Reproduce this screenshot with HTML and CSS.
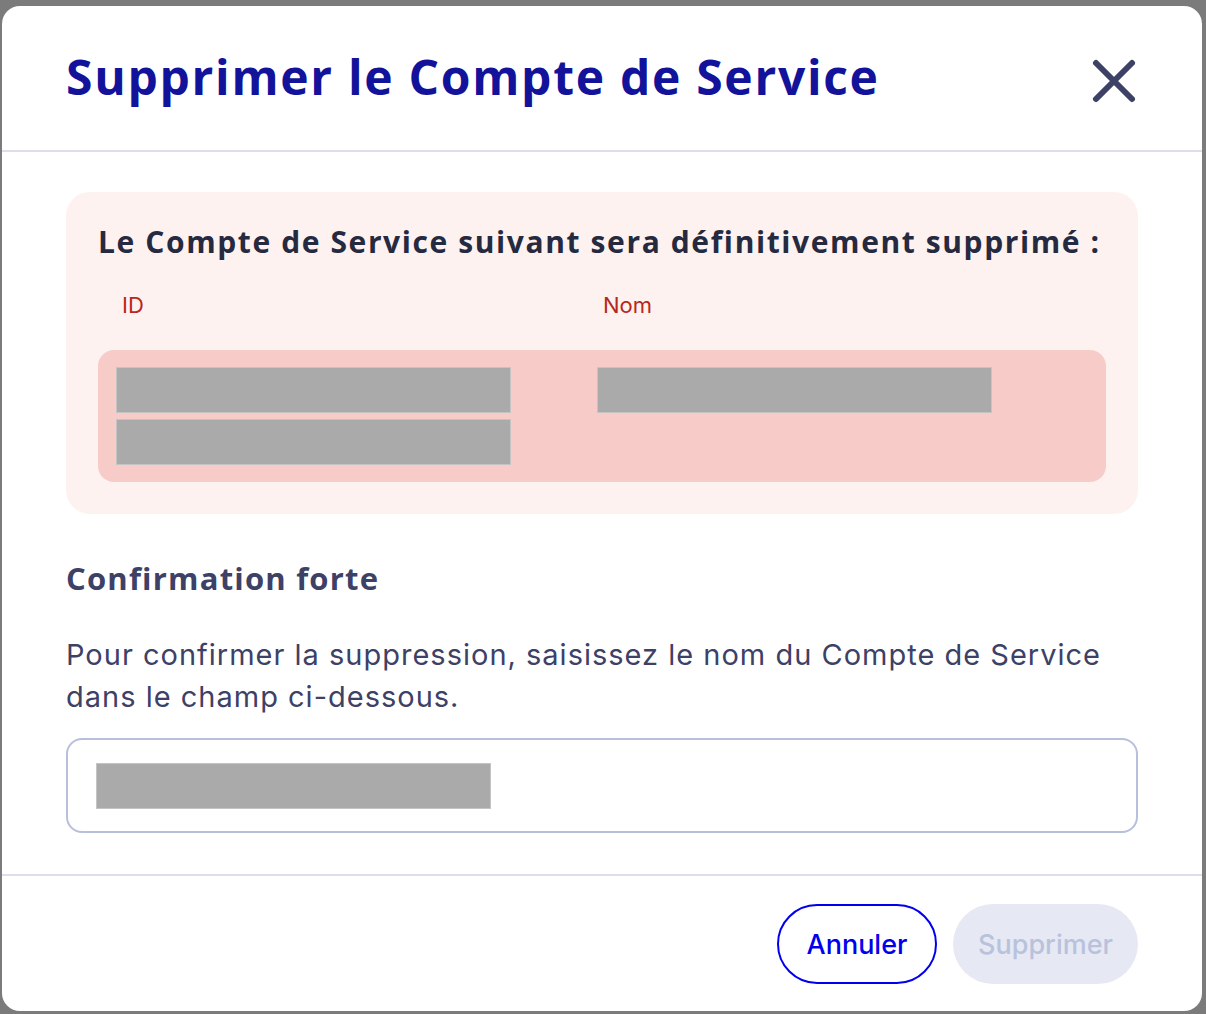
FILE: index.html
```html
<!DOCTYPE html>
<html lang="fr">
<head>
  <meta charset="UTF-8">
  <meta name="viewport" content="width=device-width, initial-scale=1.0">
  <title>Supprimer le Compte de Service</title>
  <link rel="stylesheet" href="styles.css">
</head>
<body>
  <div class="modal">
    <div class="modal-header">
      <h1>Supprimer le Compte de Service</h1>
      <button class="close-btn" aria-label="Fermer">
        <svg width="48" height="48" viewBox="0 0 48 48">
          <path d="M6 6 L42 42 M42 6 L6 42" stroke="#3d4166" stroke-width="6" stroke-linecap="round" fill="none"/>
        </svg>
      </button>
    </div>

    <div class="modal-body">
      <div class="warning-box">
        <h3>Le Compte de Service suivant sera définitivement supprimé :</h3>
        <div class="cols labels">
          <span>ID</span>
          <span>Nom</span>
        </div>
        <div class="cols values">
          <div class="cell">
            <div class="redacted"></div>
            <div class="redacted"></div>
          </div>
          <div class="cell">
            <div class="redacted"></div>
          </div>
        </div>
      </div>

      <h2>Confirmation forte</h2>
      <p>Pour confirmer la suppression, saisissez le nom du Compte de Service dans le champ ci-dessous.</p>
      <div class="field">
        <span class="caret"></span>
        <div class="redacted"></div>
      </div>
    </div>

    <div class="modal-footer">
      <button class="btn btn-outline">Annuler</button>
      <button class="btn btn-disabled" disabled>Supprimer</button>
    </div>
  </div>
</body>
</html>
```

FILE: styles.css
```css
body {
  margin: 0;
  padding: 6px 4px 3px 2px;
  background: #7b7b7b;
  font-family: Inter, "Noto Sans", sans-serif;
}
.modal {
  background: #fff;
  border-radius: 18px;
  height: 1005px;
  box-sizing: border-box;
  display: flex;
  flex-direction: column;
  overflow: hidden;
}
.modal-header {
  height: 144px;
  border-bottom: 2px solid #dcdeec;
  display: flex;
  align-items: center;
  justify-content: space-between;
  padding: 0 64px;
}
.modal-header h1 {
  margin: 0;
  font-family: "Open Sans", sans-serif;
  font-weight: 700;
  font-size: 48px;
  color: #12139a;
  letter-spacing: 1.7px;
  position: relative;
  top: -2px;
}
.close-btn {
  background: none;
  border: none;
  padding: 0;
  width: 48px;
  height: 48px;
  cursor: pointer;
  position: relative;
  top: 3px;
}
.modal-body {
  flex: 1;
  padding: 40px 64px 0;
  color: #3d4166;
}
.warning-box {
  background: #fdf2f0;
  border-radius: 24px;
  padding: 28px 32px 32px;
}
.warning-box h3 {
  margin: 0;
  font-family: "Open Sans", sans-serif;
  font-weight: 700;
  font-size: 30px;
  line-height: 44px;
  letter-spacing: 1.6px;
  color: #262a40;
}
.cols {
  display: grid;
  grid-template-columns: 481px 1fr;
}
.labels {
  padding: 25px 24px 0;
  height: 86px;
  box-sizing: border-box;
  font-size: 22px;
  line-height: 32px;
  color: #b8261c;
}
.values {
  background: #f7cbc8;
  border-radius: 16px;
  padding: 17px 18px;
  height: 132px;
  box-sizing: border-box;
}
.cell {
  display: flex;
  flex-direction: column;
  gap: 6px;
}
.redacted {
  width: 395px;
  height: 46px;
  background: #aaaaaa;
  border: 1px solid #c4c4c4;
  box-sizing: border-box;
}
.modal-body h2 {
  margin: 44px 0 0;
  font-family: "Open Sans", sans-serif;
  font-weight: 700;
  font-size: 31px;
  line-height: 40px;
  letter-spacing: 1.2px;
  color: #3d4166;
}
.modal-body p {
  margin: 36px 0 0;
  font-size: 29px;
  line-height: 42px;
  letter-spacing: 1px;
  color: #3d4166;
}
.field {
  margin-top: 20px;
  height: 95px;
  border: 2px solid #b8bfdc;
  border-radius: 16px;
  box-sizing: border-box;
  display: flex;
  align-items: center;
  padding-left: 28px;
}
.caret {
  width: 2px;
  height: 20px;
  background: #b8bfdc;
  margin-right: -2px;
}
.modal-footer {
  border-top: 2px solid #dcdeec;
  display: flex;
  justify-content: flex-end;
  gap: 16px;
  padding: 28px 64px 27px;
}
.btn {
  height: 80px;
  border-radius: 40px;
  font-family: Inter, "Noto Sans", sans-serif;
  font-size: 27px;
  font-weight: 500;
  box-sizing: border-box;
  cursor: pointer;
}
.btn-outline {
  width: 160px;
  background: #fff;
  color: #0000ee;
  border: 2px solid #0000ee;
}
.btn-disabled {
  width: 185px;
  background: #e6e9f3;
  color: #b9c2dc;
  border: none;
  cursor: default;
}
```
